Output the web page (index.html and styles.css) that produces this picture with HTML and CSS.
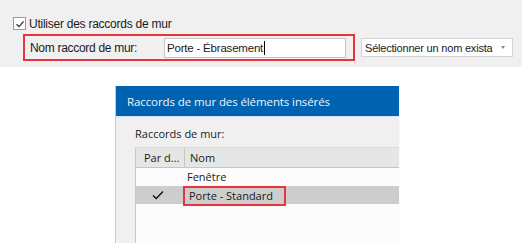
FILE: index.html
```html
<!DOCTYPE html>
<html lang="fr">
<head>
    <meta charset="UTF-8">
    <title>Raccords de mur</title>
    <link rel="stylesheet" href="styles.css">
</head>
<body>
    <div class="options">
        <label class="check-row">
            <span class="checkbox">
                <svg width="10" height="10" viewBox="0 0 10 10"><path d="M1.5 5.2 L4 7.6 L8.6 2.4" fill="none" stroke="#333" stroke-width="1.3"/></svg>
            </span>
            Utiliser des raccords de mur
        </label>
        <div class="name-row">
            <div class="highlight name-box">
                <span class="name-label">Nom raccord de mur:</span>
                <div class="text-input">Porte - Ébrasement<span class="caret"></span></div>
            </div>
            <div class="dropdown">
                <span class="dropdown-text">Sélectionner un nom exista</span>
                <span class="arrow"></span>
            </div>
        </div>
    </div>

    <div class="dialog">
        <div class="dialog-title">Raccords de mur des éléments insérés</div>
        <div class="dialog-body">
            <div class="list-label">Raccords de mur:</div>
            <div class="list">
                <div class="list-header">
                    <div class="col-default">Par d...</div>
                    <div class="col-name">Nom</div>
                </div>
                <div class="list-row">
                    <div class="col-default"></div>
                    <div class="col-name">Fenêtre</div>
                </div>
                <div class="list-row selected">
                    <div class="col-default">
                        <svg width="12" height="10" viewBox="0 0 12 10"><path d="M1 5.5 L4.2 8.5 L11 1.5" fill="none" stroke="#111" stroke-width="1.4"/></svg>
                    </div>
                    <div class="col-name"><span class="highlight row-box">Porte - Standard</span></div>
                </div>
            </div>
        </div>
    </div>
</body>
</html>
```

FILE: styles.css
```css
body {
    margin: 0;
    background-color: #ffffff;
    font-family: "Liberation Sans", Arial, sans-serif;
    font-size: 12px;
    color: #1a1a1a;
    overflow: hidden;
    width: 522px;
    height: 243px;
}
.options {
    background-color: #f0f0f0;
    height: 67px;
    box-sizing: border-box;
    padding: 17px 0 0 13px;
}
.check-row {
    display: flex;
    align-items: center;
    gap: 3px;
    height: 13px;
    letter-spacing: -0.25px;
}
.checkbox {
    width: 11px;
    height: 11px;
    border: 1px solid #9a9a9a;
    background-color: #fff;
    display: flex;
    align-items: center;
    justify-content: center;
}
.name-row {
    display: flex;
    align-items: center;
    margin-top: 4px;
    margin-left: 10px;
}
.highlight {
    border: 2px solid #e8343c;
}
.name-box {
    display: flex;
    align-items: center;
    width: 332px;
    height: 27px;
    box-sizing: border-box;
    padding: 0 0 0 5px;
}
.name-label {
    width: 134px;
    letter-spacing: -0.3px;
}
.text-input {
    width: 182px;
    height: 20px;
    border: 1px solid #c4c4c4;
    background-color: #fff;
    padding-left: 2px;
    box-sizing: border-box;
    display: flex;
    align-items: center;
    font-size: 11.5px;
    letter-spacing: -0.2px;
}
.caret {
    width: 1px;
    height: 14px;
    background-color: #000;
    margin-left: 1px;
}
.dropdown {
    margin-left: 6px;
    width: 152px;
    height: 19px;
    box-sizing: border-box;
    border: 1px solid #d4d4d4;
    background-color: #fff;
    display: flex;
    align-items: center;
    gap: 8px;
    padding: 0 8px 0 3px;
    font-size: 11px;
    letter-spacing: -0.2px;
}
.dropdown-text {
    flex-grow: 1;
    white-space: nowrap;
}
.arrow {
    flex-shrink: 0;
    width: 0;
    height: 0;
    border-left: 2.5px solid transparent;
    border-right: 2.5px solid transparent;
    border-top: 3px solid #888;
}
.dialog {
    margin: 19px 0 0 115px;
    width: 285px;
    height: 157px;
    background-color: #f0f0f0;
    border-left: 1px solid #c8c8c8;
    border-right: 1px solid #fafafa;
    box-sizing: border-box;
    overflow: hidden;
    font-family: "Open Sans", "Noto Sans", sans-serif;
    font-size: 11px;
}
.dialog-title {
    background-color: #0063b1;
    color: #eef3fa;
    font-size: 11.5px;
    height: 30px;
    line-height: 32px;
    padding-left: 11px;
    letter-spacing: -0.1px;
    border-bottom: 1px solid #d8e2ee;
}
.dialog-body {
    padding: 9px 0 0 19px;
}
.list-label {
    color: #222;
    height: 21px;
}
.list {
    border-left: 1px solid #c8c8c8;
    border-top: 1px solid #d8d8d8;
    background-color: #fcfcfc;
    height: 100px;
    color: #1a1a1a;
}
.list-header {
    display: flex;
    height: 19px;
    background-color: #e6e6e6;
    border-bottom: 1px solid #c6c6c6;
    line-height: 19px;
}
.list-header .col-default {
    border-right: 1px solid #c6c6c6;
}
.col-default {
    width: 49px;
    padding-left: 8px;
    box-sizing: border-box;
    flex-shrink: 0;
}
.col-name {
    padding-left: 5px;
    flex-grow: 1;
}
.list-row {
    display: flex;
    height: 18px;
    line-height: 18px;
}
.list-row .col-name {
    padding-left: 2px;
}
.list-row.selected {
    background-color: #cdcdcd;
}
.selected .col-default {
    display: flex;
    align-items: center;
    padding-left: 16px;
}
.row-box {
    display: inline-block;
    height: 16px;
    line-height: 16px;
    padding: 0 11px 0 4px;
    margin-left: -4px;
}
```
